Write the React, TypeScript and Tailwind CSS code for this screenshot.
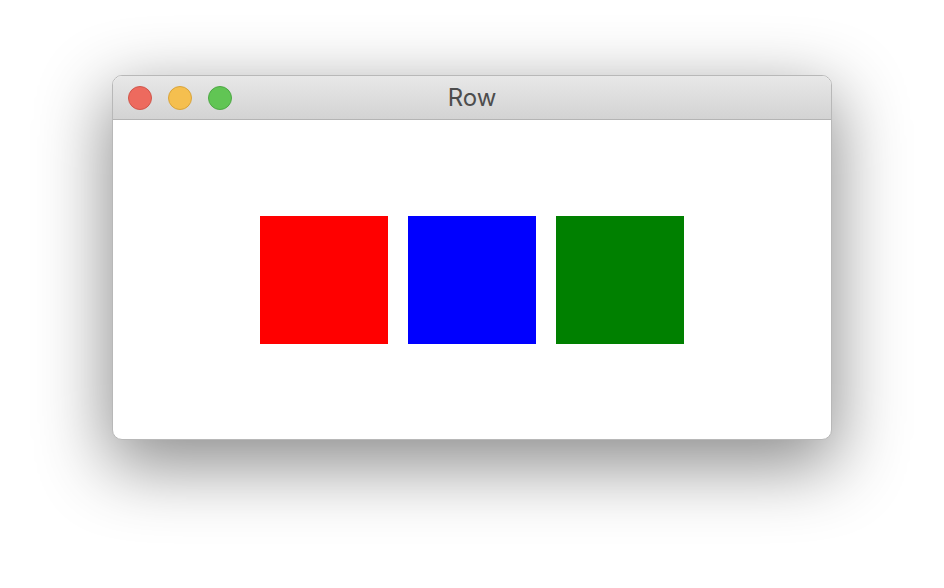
export default function App() {
    const boxes = ['bg-[#ff0000]', 'bg-[#0000ff]', 'bg-[#008000]'];

    return (
        <div className="w-[944px] h-[588px] bg-white flex justify-center pt-[75px]">
            <div className="w-[720px] h-[365px] rounded-[10px] bg-white flex flex-col overflow-hidden border border-[#b8b8b8] shadow-[0_22px_70px_4px_rgba(0,0,0,0.45)]">
                {/* Title bar */}
                <div className="relative h-[44px] shrink-0 flex items-center pl-[15px] gap-[16px] bg-gradient-to-b from-[#e8e8e8] to-[#d3d3d3] border-b border-[#b4b4b4]">
                    <div className="w-[24px] h-[24px] rounded-full bg-[#ed6a5e] border border-[#d0564b]" />
                    <div className="w-[24px] h-[24px] rounded-full bg-[#f5bf4f] border border-[#d9a43b]" />
                    <div className="w-[24px] h-[24px] rounded-full bg-[#61c554] border border-[#4ea845]" />
                    <span
                        className="absolute left-0 right-0 text-center text-[24px] leading-none text-[#4d4d4d] pointer-events-none"
                        style={{ fontFamily: 'Inter, "Noto Sans", sans-serif' }}
                    >
                        Row
                    </span>
                </div>

                {/* Content */}
                <div className="flex-1 flex items-center justify-center gap-[20px]">
                    {boxes.map(c => (
                        <div key={c} className={`w-[128px] h-[128px] ${c}`} />
                    ))}
                </div>
            </div>
        </div>
    );
}
